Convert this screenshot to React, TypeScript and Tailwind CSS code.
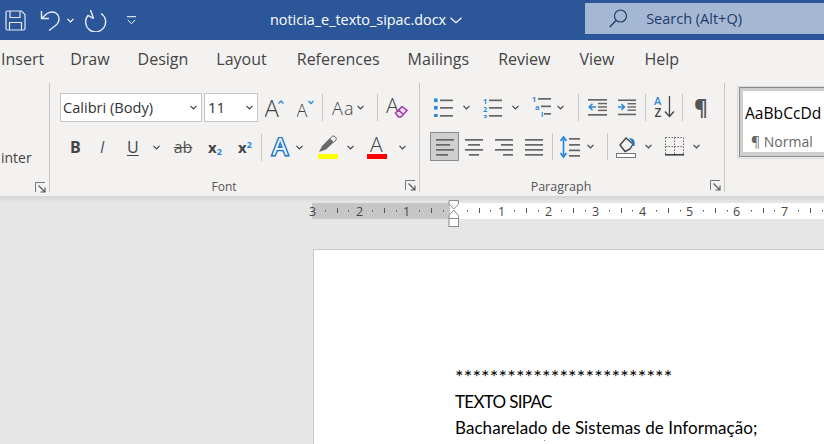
import React from "react";

const G = "#666666";
const B = "#2b88d8";

function Chev({ c = "#444", w = 7, h = 5, cls = "" }: { c?: string; w?: number; h?: number; cls?: string }) {
  return (
    <svg width={w} height={h} viewBox={`0 0 ${w} ${h}`} className={"shrink-0 " + cls}>
      <path d={`M0.5 0.8 L${w / 2} ${h - 1.2} L${w - 0.5} 0.8`} fill="none" stroke={c} strokeWidth="1.2" />
    </svg>
  );
}

function Sep({ cls = "" }: { cls?: string }) {
  return <div className={"w-px h-[27px] bg-[#c8c6c4] shrink-0 " + cls} />;
}

function Lines({ xs, cls = "" }: { xs: [number, number][]; cls?: string }) {
  const ys = [2, 7, 12, 17];
  return (
    <svg width={18} height={20} viewBox="0 0 18 20" className={"shrink-0 " + cls}>
      {xs.map(([a, b], i) => (
        <rect key={i} x={a} y={ys[i]} width={b - a} height={1.7} fill={G} />
      ))}
    </svg>
  );
}

function Launcher() {
  return (
    <svg width={11} height={11} viewBox="0 0 11 11" className="absolute right-[3px] top-0">
      <path d="M0.5 10 V0.5 H10" fill="none" stroke="#777" strokeWidth="1" />
      <path d="M3.5 3.5 L10 10 M10 5.5 V10 H5.5" fill="none" stroke="#555" strokeWidth="1.1" />
    </svg>
  );
}

function LetterA({ size, x, y, fill = "#444", weight = 400 }: { size: number; x: number; y: number; fill?: string; weight?: number }) {
  return (
    <text x={x} y={y} fontSize={size} fill={fill} fontWeight={weight} fontFamily="'Open Sans', sans-serif">
      A
    </text>
  );
}

function ListBullets({ cls = "" }: { cls?: string }) {
  return (
    <svg width={19} height={20} viewBox="0 0 19 20" className={"shrink-0 " + cls}>
      {[1.5, 9, 17].map((y) => (
        <rect key={y} x={0} y={y} width={3.6} height={3.6} fill={B} />
      ))}
      {[2.5, 10, 18].map((y) => (
        <rect key={y} x={6} y={y} width={13} height={1.7} fill={G} />
      ))}
    </svg>
  );
}

function ListNumbers({ cls = "" }: { cls?: string }) {
  return (
    <svg width={19} height={21} viewBox="0 0 19 21" className={"shrink-0 " + cls}>
      {["1", "2", "3"].map((t, i) => (
        <text key={t} x={0} y={6.5 + i * 8} fontSize={7.5} fontWeight={700} fill={B} fontFamily="'Open Sans', sans-serif">
          {t}
        </text>
      ))}
      {[2.5, 10, 18].map((y) => (
        <rect key={y} x={6} y={y} width={13} height={1.7} fill={G} />
      ))}
    </svg>
  );
}

function ListMulti({ cls = "" }: { cls?: string }) {
  return (
    <svg width={19} height={24} viewBox="0 0 19 24" className={"shrink-0 " + cls}>
      <text x={0} y={7} fontSize={7.5} fontWeight={700} fill={B} fontFamily="'Open Sans', sans-serif">1</text>
      <text x={3} y={14.5} fontSize={7.5} fontWeight={700} fill={B} fontFamily="'Open Sans', sans-serif">a</text>
      <text x={9} y={22} fontSize={7.5} fontWeight={700} fill={B} fontFamily="'Open Sans', sans-serif">i</text>
      <rect x={6} y={3} width={13} height={1.7} fill={G} />
      <rect x={9} y={10.5} width={10} height={1.7} fill={G} />
      <rect x={12} y={18} width={7} height={1.7} fill={G} />
    </svg>
  );
}

function Indent({ dir, w = 19, cls = "" }: { dir: "dec" | "inc"; w?: number; cls?: string }) {
  const dec = dir === "dec";
  return (
    <svg width={w} height={20} viewBox="0 0 19 20" className={"shrink-0 " + cls}>
      <rect x={0} y={2} width={19} height={1.7} fill={G} />
      <rect x={10} y={9.2} width={9} height={1.5} fill={G} />
      <rect x={10} y={5.8} width={9} height={1.5} fill={G} />
      <rect x={10} y={12.6} width={9} height={1.5} fill={G} />
      <rect x={0} y={17} width={19} height={1.7} fill={G} />
      {dec ? (
        <path d="M8 10 H1.5 M4.5 6.8 L1.2 10 L4.5 13.2" fill="none" stroke={B} strokeWidth="1.6" />
      ) : (
        <path d="M0 10 H6.5 M3.5 6.8 L6.8 10 L3.5 13.2" fill="none" stroke={B} strokeWidth="1.6" />
      )}
    </svg>
  );
}

export default function App() {
  return (
    <div className="w-[824px] h-[444px] overflow-hidden bg-[#e6e6e6] relative font-['Open_Sans',sans-serif]">
      {/* Title bar */}
      <div className="h-10 bg-[#2b579a] flex items-center text-white">
        <svg width={21} height={21} viewBox="0 0 21 21" className="ml-[5px] shrink-0">
          <path d="M1 2.5 Q1 1 2.5 1 H16.5 L20 4.5 V18.5 Q20 20 18.5 20 H2.5 Q1 20 1 18.5 Z" fill="none" stroke="#dfe7f2" strokeWidth="1.2" />
          <path d="M5 1 V7.5 H15 V1 M4.5 20 V12.5 H16.5 V20" fill="none" stroke="#dfe7f2" strokeWidth="1.2" />
        </svg>
        <svg width={21} height={21} viewBox="0 0 21 21" className="ml-[14px] shrink-0">
          <path d="M1.5 1 V8.5 H9 M1.5 8.5 L7 3.5 Q11 1 15 2.5 Q19.5 5 19 10 Q18.5 13.5 15 16 L9 20.5" fill="none" stroke="#e8edf5" strokeWidth="1.4" />
        </svg>
        <Chev c="#fff" cls="ml-[6px]" />
        <svg width={22} height={23} viewBox="0 0 22 23" className="ml-[11px] shrink-0">
          <path d="M16 4.5 A10 10 0 1 1 3 6.5 L8.5 9.5" fill="none" stroke="#e8edf5" strokeWidth="1.4" />
          <path d="M5.5 1 L8.5 9.5" fill="none" stroke="#e8edf5" strokeWidth="1.4" />
        </svg>
        <svg width={9} height={9} viewBox="0 0 9 9" className="ml-[20px] shrink-0">
          <path d="M0 0.7 H9 M0.8 4 L4.5 7.7 L8.2 4" fill="none" stroke="#fff" strokeWidth="1" />
        </svg>
        <span className="ml-[134px] text-[14.4px] leading-none whitespace-nowrap">noticia_e_texto_sipac.docx</span>
        <Chev c="#fff" w={12} h={7} cls="ml-[4px]" />
        <div className="ml-[123px] flex-1 h-[31px] self-start mt-[3px] bg-[#a5b8d3] flex items-center text-[#1e3a6b]">
          <svg width={19} height={19} viewBox="0 0 19 19" className="ml-[24px] shrink-0">
            <circle cx="11.5" cy="7" r="6" fill="none" stroke="#1e3a6b" strokeWidth="1.1" />
            <path d="M7 11.5 L0.8 18" fill="none" stroke="#1e3a6b" strokeWidth="1.3" />
          </svg>
          <span className="ml-[18px] text-[14.5px] whitespace-nowrap">Search (Alt+Q)</span>
        </div>
      </div>

      {/* Tabs */}
      <div className="h-[43px] bg-[#f3f2f1] flex pl-[1px] pt-[8px] text-[16px] leading-[22px] text-[#444444] whitespace-nowrap">
        <span>Insert</span>
        <span className="ml-[26px]">Draw</span>
        <span className="ml-[28px]">Design</span>
        <span className="ml-[28px]">Layout</span>
        <span className="ml-[30px]">References</span>
        <span className="ml-[28px]">Mailings</span>
        <span className="ml-[29px]">Review</span>
        <span className="ml-[29px]">View</span>
        <span className="ml-[30px]">Help</span>
      </div>

      {/* Ribbon */}
      <div className="h-[113px] bg-[#f3f2f1] flex text-[#444444]">
        {/* Clipboard remnant */}
        <div className="w-[50px] h-[109px] border-r border-[#c8c6c4] shrink-0 relative">
          <span className="absolute left-[1px] top-[65px] text-[14px] leading-5">inter</span>
          <div className="absolute left-0 right-0 top-[99px]"><Launcher /></div>
        </div>

        {/* Font */}
        <div className="w-[370px] h-[109px] border-r border-[#c8c6c4] shrink-0 flex flex-col">
          <div className="flex items-center h-[29px] mt-[10px] pl-[10px]">
            <div className="w-[142px] h-[29px] bg-white border border-[#c8c6c4] flex items-center justify-between pl-[2px] pr-[4px] text-[14.6px] text-[#333]">
              <span className="whitespace-nowrap">Calibri (Body)</span>
              <Chev />
            </div>
            <div className="ml-[2px] w-[54px] h-[29px] bg-white border border-[#c8c6c4] flex items-center justify-between pl-[3px] pr-[4px] text-[15px] text-[#333]">
              <span>11</span>
              <Chev />
            </div>
            <svg width={20} height={20} viewBox="0 0 20 20" className="ml-[7px] shrink-0">
              <LetterA size={24} x={-0.5} y={18.5} weight={300} />
              <path d="M13.5 5.5 L16 3 L18.5 5.5" fill="none" stroke={B} strokeWidth="1.4" />
            </svg>
            <svg width={18} height={20} viewBox="0 0 18 20" className="ml-[12px] shrink-0">
              <LetterA size={18} x={-0.5} y={18.5} weight={300} />
              <path d="M11.5 3 L14 5.5 L16.5 3" fill="none" stroke={B} strokeWidth="1.4" />
            </svg>
            <Sep cls="ml-[7px]" />
            <span className="ml-[9px] w-[22px] text-[18px] leading-none font-light tracking-[1.2px] text-[#444] whitespace-nowrap">Aa</span>
            <Chev cls="ml-[3px]" />
            <Sep cls="ml-[13px]" />
            <svg width={22} height={22} viewBox="0 0 22 22" className="ml-[8px] shrink-0">
              <LetterA size={21} x={0} y={16} weight={300} />
              <path d="M9.5 16 L16 9.5 L21 13.5 L15 20 H12.5 Z M12.5 13 L17.5 17.5" fill="#f3d9f3" stroke="#a23ea8" strokeWidth="1.6" />
            </svg>
          </div>
          <div className="flex items-center h-[29px] mt-[11px] pl-[10px]">
            <span className="ml-[10px] w-[10px] text-[16px] font-bold text-[#444]">B</span>
            <span className="ml-[20px] w-[8px] text-[16px] italic text-[#555]">I</span>
            <span className="ml-[19px] w-[13px] text-[16px] leading-[18px] underline underline-offset-2 text-[#444]">U</span>
            <Chev cls="ml-[13px]" />
            <span className="ml-[13px] w-[20px] text-[16px] line-through text-[#555] text-center">ab</span>
            <span className="ml-[15px] w-[14px] text-[15px] font-bold text-[#444] leading-none whitespace-nowrap">
              x<sub className="text-[9px] text-[#2b88d8]">2</sub>
            </span>
            <span className="ml-[16px] w-[14px] text-[15px] font-bold text-[#444] leading-none whitespace-nowrap">
              x<sup className="text-[9px] text-[#2b88d8]">2</sup>
            </span>
            <Sep cls="ml-[9px]" />
            <svg width={20} height={20} viewBox="0 0 20 20" className="ml-[8px] shrink-0">
              <text x={10} y={18} textAnchor="middle" fontSize={24} fontWeight={400} fill="#f2f9fe" stroke="#1d74c4" strokeWidth="3" style={{ paintOrder: "stroke" }} fontFamily="'Open Sans', sans-serif">A</text>
            </svg>
            <Chev cls="ml-[6px]" />
            <svg width={20} height={24} viewBox="0 0 20 24" className="ml-[15px] shrink-0">
              <path d="M1 17 L4 11 L12 3 L16 7 L8 14.5 Z" fill="#6a6a6a" />
              <path d="M12 3.5 L14.5 1.2 Q16 0.5 17.5 2 Q19 3.5 18 5 L15.5 7.5 Z" fill="#f3f2f1" stroke="#6a6a6a" />
              <rect x={0} y={19} width={20} height={5} fill="#ffff00" />
            </svg>
            <Chev cls="ml-[9px]" />
            <svg width={20} height={24} viewBox="0 0 20 24" className="ml-[13px] shrink-0">
              <LetterA size={21} x={3} y={16.5} weight={300} />
              <rect x={0} y={19} width={20} height={5} fill="#ff0000" />
            </svg>
            <Chev cls="ml-[12px]" />
          </div>
          <div className="relative mt-[19px] h-[12px] flex justify-center text-[12px] leading-[12px] text-[#555]">
            <span className="ml-[-21px] mt-[1px]">Font</span>
            <Launcher />
          </div>
        </div>

        {/* Paragraph */}
        <div className="w-[305px] h-[109px] border-r border-[#c8c6c4] shrink-0 flex flex-col">
          <div className="flex items-center h-[29px] mt-[10px] pl-[14px]">
            <ListBullets />
            <Chev cls="ml-[10px]" />
            <ListNumbers cls="ml-[13px]" />
            <Chev cls="ml-[10px]" />
            <ListMulti cls="ml-[13px]" />
            <Chev cls="ml-[6px]" />
            <Sep cls="ml-[14px]" />
            <Indent dir="dec" cls="ml-[9px]" />
            <Indent dir="inc" w={18} cls="ml-[11px]" />
            <Sep cls="ml-[9px]" />
            <svg width={21} height={24} viewBox="0 0 21 24" className="ml-[8px] shrink-0">
              <text x={0} y={10} fontSize={11} fontWeight={600} fill={B} fontFamily="'Open Sans', sans-serif">A</text>
              <text x={0.5} y={22} fontSize={12} fontWeight={600} fill="#444" fontFamily="'Open Sans', sans-serif">Z</text>
              <path d="M15.5 1 V21 M11 16.5 L15.5 21.5 L20 16.5" fill="none" stroke="#444" strokeWidth="1.3" />
            </svg>
            <Sep cls="ml-[7px]" />
            <span className="ml-[11px] w-[14px] text-[21px] leading-none font-bold text-[#555]">¶</span>
          </div>
          <div className="flex items-center h-[29px] mt-[11px] pl-[10px]">
            <div className="w-[29px] h-[29px] bg-[#cfcfcf] border border-[#8a8a8a] flex items-center justify-center shrink-0">
              <Lines xs={[[0, 18], [0, 14], [0, 18], [0, 12]]} />
            </div>
            <Lines cls="ml-[6px]" xs={[[0, 18], [3, 15], [0, 18], [4, 14]]} />
            <Lines cls="ml-[12px]" xs={[[0, 18], [6, 18], [0, 18], [8, 18]]} />
            <Lines cls="ml-[12px]" xs={[[0, 18], [0, 18], [0, 18], [0, 18]]} />
            <Sep cls="ml-[9px]" />
            <svg width={20} height={24} viewBox="0 0 20 24" className="ml-[7px] shrink-0">
              <path d="M3.5 2 V22 M0.5 6 L3.5 2 L6.5 6 M0.5 18 L3.5 22 L6.5 18" fill="none" stroke={B} strokeWidth="1.7" />
              <rect x={9} y={3} width={11} height={1.7} fill={G} />
              <rect x={9} y={9} width={11} height={1.7} fill={G} />
              <rect x={9} y={14.5} width={11} height={1.7} fill={G} />
              <rect x={9} y={20} width={11} height={1.7} fill={G} />
            </svg>
            <Chev cls="ml-[7px]" />
            <Sep cls="ml-[13px]" />
            <svg width={20} height={24} viewBox="0 0 20 24" className="ml-[8px] shrink-0">
              <path d="M4 10 L10 3 L17 9 L14 14 L9 16.5 Z" fill="#f3f2f1" stroke="#444" strokeWidth="1.4" />
              <path d="M13 3.5 Q16 2.5 18 5 Q19 7 18.5 11 L16.5 11 L16 6.5 Z" fill="#1e78c8" />
              <rect x={0.5} y={18.5} width={19} height={4} fill="#fff" stroke="#777" />
            </svg>
            <Chev cls="ml-[9px]" />
            <svg width={19} height={19} viewBox="0 0 19 19" className="ml-[13px] shrink-0">
              <path d="M0.5 0.5 H18.5 M0.5 0.5 V18 M18.5 0.5 V18 M9.5 0.5 V18 M0.5 9.5 H18.5" fill="none" stroke="#666" strokeDasharray="1.5 1.5" />
              <rect x={0} y={17} width={19} height={1.6} fill="#444" />
            </svg>
            <Chev cls="ml-[9px]" />
          </div>
          <div className="relative mt-[19px] h-[12px] flex justify-center text-[12.5px] leading-[12px] text-[#555]">
            <span className="ml-[-22px] mt-[1px]">Paragraph</span>
            <Launcher />
          </div>
        </div>

        {/* Styles */}
        <div className="flex-1 pl-[12px] pt-[3px]">
          <div className="h-[73px] border-l border-t border-b border-[#d8d8d8] pl-[2px] pt-[1px] pb-[3px]">
            <div className="h-[68px] border-l-[3px] border-t-[3px] border-b-[4px] border-l-[#cfcfcf] border-t-[#cfcfcf] border-b-[#cfcfcf] bg-white outline-1 outline-[#8a8a8a] flex flex-col pl-[2px]">
              <span className="mt-[12px] text-[15.6px] leading-5 text-black whitespace-nowrap">AaBbCcDd</span>
              <span className="mt-[11px] ml-[6px] text-[14px] leading-4 text-[#666] whitespace-nowrap">¶ Normal</span>
            </div>
          </div>
        </div>
      </div>

      {/* Workspace */}
      <div className="relative h-[248px] bg-[#e6e6e6]">
        <div className="h-[6px] bg-gradient-to-b from-[#d4d4d4] to-[#e6e6e6]" />
        {/* Ruler */}
        <svg width={516} height={16} viewBox="0 0 516 16" className="ml-[308px] mt-[1px] block">
          <rect x={4} y={0} width={138} height={16} fill="#c6c6c6" />
          <rect x={142} y={0} width={374} height={16} fill="#ffffff" />
          {[
            ["3", 4],
            ["2", 51],
            ["1", 98],
            ["1", 193],
            ["2", 240],
            ["3", 287],
            ["4", 334],
            ["5", 381],
            ["6", 428],
            ["7", 476],
          ].map(([t, x]) => (
            <text key={String(x)} x={Number(x) + 0.5} y={12.5} fontSize={12.5} textAnchor="middle" fill="#444" fontFamily="'Open Sans', sans-serif">
              {t}
            </text>
          ))}
          {Array.from({ length: 44 }).map((_, i) => {
            const x = 5 + i * 11.83;
            if (i % 4 === 0) return null;
            const major = i % 2 === 0;
            return <rect key={i} x={Math.round(x)} y={major ? 5 : 7} width={1} height={major ? 5 : 1.5} fill="#555" />;
          })}
        </svg>
        {/* Indent markers */}
        <svg width={12} height={29} viewBox="0 0 12 29" className="absolute left-[448px] top-[4px]">
          <path d="M1 0.5 H10.5 V4 L5.8 9 L1 4 Z" fill="#fff" stroke="#8a8a8a" />
          <path d="M5.8 10 L10.5 15.5 V18.5 H1 V15.5 Z" fill="#fff" stroke="#8a8a8a" />
          <rect x={1} y={18.5} width={9.5} height={8} fill="#fff" stroke="#8a8a8a" />
        </svg>
        {/* Page */}
        <div className="absolute left-[313px] top-[53px] w-[520px] h-[300px] bg-white border border-[#c6c6c6] pl-[141px] pt-[113px] text-black font-['Lato',sans-serif] text-[17px] leading-[26px] whitespace-nowrap">
          <div className="text-[20px] tracking-[0.2px]">*************************</div>
          <div className="tracking-[-0.7px]">TEXTO SIPAC</div>
          <div className="tracking-[0.06px]">Bacharelado de Sistemas de Informação;</div>
          <div className="absolute left-[230px] top-[190px] w-px h-px bg-[#888]" />
        </div>
      </div>
    </div>
  );
}
